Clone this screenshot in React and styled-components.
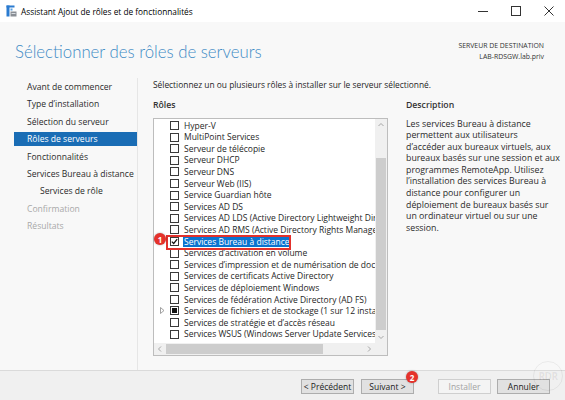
import React from "react";
import styled, { createGlobalStyle } from "styled-components";

const Global = createGlobalStyle`
  html, body { margin: 0; padding: 0; }
  body {
    width: 565px; height: 400px; overflow: hidden; background: #fff;
    font-family: "Open Sans", "Noto Sans", sans-serif; color: #262626;
  }
  * { box-sizing: border-box; }
`;

const Window = styled.div`
  display: flex; flex-direction: column;
  width: 565px; height: 400px; background: #f8f8f8;
`;

const TitleBar = styled.div`
  height: 22px; background: #fff; display: flex; align-items: center;
  padding-left: 6px; flex-shrink: 0;
`;
const TitleText = styled.span`
  flex: 1; margin-left: 4px; font-size: 8.3px; color: #000; white-space: nowrap;
`;
const Controls = styled.div`display: flex; height: 100%;`;
const CtrlBtn = styled.div`
  width: 33px; height: 100%; display: flex; align-items: center; justify-content: center;
`;

const Header = styled.div`
  height: 56px; display: flex; justify-content: space-between; align-items: flex-start;
  padding: 0 21px 0 15px; flex-shrink: 0;
`;
const Heading = styled.h1`
  margin: 18px 0 0; font-family: Lato, "Open Sans", sans-serif; font-size: 16.8px; font-weight: 300;
  color: #3f8bc5; line-height: 24px;
`;
const Dest = styled.div`
  margin-top: 19px; text-align: right; font-size: 6.9px; line-height: 10.5px; color: #333;
`;

const Body = styled.div`display: flex; flex: 1; min-height: 0;`;

const Nav = styled.nav`
  width: 138px; border-right: 1px solid #e6e6e6; padding: 2px 0 0 14px;
  display: flex; flex-direction: column; gap: 3.4px; flex-shrink: 0;
`;
const NavItem = styled.div`
  height: 14px; line-height: 14px; padding-left: ${p => (p.$sub ? 26 : 13)}px;
  font-size: 8.6px; white-space: nowrap;
  color: ${p => (p.$active ? "#fff" : p.$disabled ? "#a8a8a8" : "#2b2b2b")};
  background: ${p => (p.$active ? "#1a6db5" : "transparent")};
`;

const Main = styled.div`
  flex: 1; padding: 1px 0 0 15px; display: flex; flex-direction: column; min-width: 0;
`;
const Instruction = styled.div`font-size: 8.4px; line-height: 12px; white-space: nowrap;`;
const Columns = styled.div`display: flex; margin-top: 8px; gap: 18px;`;
const LeftCol = styled.div`width: 235px; display: flex; flex-direction: column; flex-shrink: 0;`;
const RightCol = styled.div`width: 160px; display: flex; flex-direction: column;`;
const Label = styled.div`font-size: 8.7px; line-height: 12px; font-weight: 600; color: #333;`;

const ListBox = styled.div`
  position: relative; margin-top: 7px; height: 238px; border: 1px solid #bdbdbd; background: #fff;
  display: grid; grid-template-columns: minmax(0, 1fr) 12px; grid-template-rows: minmax(0, 1fr) 12px;
`;
const ListContent = styled.div`overflow: hidden; padding-top: 0.7px; min-width: 0;`;
const Row = styled.div`
  height: 11.6px; display: flex; align-items: center; padding-left: 3px; white-space: nowrap;
`;
const Expander = styled.div`
  width: 13px; height: 11.6px; display: flex; align-items: center; padding-left: 3px; flex-shrink: 0;
`;
const Check = styled.div`
  width: 9px; height: 9px; border: 1px solid #3a3a3a; background: #fff; flex-shrink: 0;
  display: flex; align-items: center; justify-content: center;
`;
const Fill = styled.div`width: 5px; height: 5px; background: #111;`;
const ItemText = styled.span`
  flex-shrink: 0; margin-left: 4px; padding: 0 1px; font-size: 8.5px; line-height: 11.6px;
  color: ${p => (p.$selected ? "#fff" : "#262626")};
  background: ${p => (p.$selected ? "#0a74d0" : "transparent")};
`;

const VScroll = styled.div`
  background: #f0f0f0; display: flex; flex-direction: column; align-items: stretch; min-height: 0;
`;
const HScroll = styled.div`background: #f0f0f0; display: flex; align-items: stretch;`;
const Corner = styled.div`background: #f0f0f0;`;
const Arrow = styled.div`
  width: 12px; height: 12px; display: flex; align-items: center; justify-content: center; flex-shrink: 0;
`;
const VTrack = styled.div`flex: 1; min-height: 0; padding: 27px 1px 0;`;
const VThumb = styled.div`height: 172px; background: #cdcdcd;`;
const HTrack = styled.div`flex: 1; padding: 1px 0;`;
const HThumb = styled.div`width: 157px; height: 100%; background: #cdcdcd;`;

const Annot = styled.div`
  position: absolute; left: 12px; top: 115.5px; width: 125px; height: 15px;
  border: 2px solid #e2312c; pointer-events: none;
`;
const Badge = styled.div`
  position: absolute; width: 12px; height: 12px; border-radius: 50%;
  background: #e5322b; color: #fff; font-size: 8px; font-weight: 700;
  display: flex; align-items: center; justify-content: center;
  box-shadow: 0 0 2px rgba(0,0,0,0.35);
  left: ${p => p.$x}px; top: ${p => p.$y}px;
`;

const Desc = styled.div`
  margin-top: 7.5px; font-size: 8.8px; line-height: 11.6px; color: #2b2b2b; white-space: nowrap;
`;
const Line = styled.div``;

const Footer = styled.div`
  position: relative; height: 30px; border-top: 1px solid #dadada; background: #f0f0f0;
  display: flex; align-items: flex-start; padding: 8px 15px 0 0; justify-content: flex-end; flex-shrink: 0;
`;
const Button = styled.div`
  width: 53px; height: 15px; margin-left: ${p => p.$gap || 0}px;
  border: 1px solid ${p => (p.$disabled ? "#cfcfcf" : "#adadad")};
  background: ${p => (p.$disabled ? "#f4f4f4" : "#e1e1e1")};
  color: ${p => (p.$disabled ? "#a3a3a3" : "#222")};
  font-size: 8.5px; display: flex; align-items: center; justify-content: center; white-space: nowrap;
`;
const Watermark = styled.div`
  position: absolute; right: 2px; top: -10px; width: 30px; height: 30px; border-radius: 50%;
  border: 1px solid rgba(0,0,0,0.06); color: rgba(0,0,0,0.07); font-size: 10px; font-weight: 700;
  display: flex; align-items: center; justify-content: center; letter-spacing: -0.5px;
`;

const items = [
  { t: "Hyper-V" },
  { t: "MultiPoint Services" },
  { t: "Serveur de télécopie" },
  { t: "Serveur DHCP" },
  { t: "Serveur DNS" },
  { t: "Serveur Web (IIS)" },
  { t: "Service Guardian hôte" },
  { t: "Services AD DS" },
  { t: "Services AD LDS (Active Directory Lightweight Directory Services)" },
  { t: "Services AD RMS (Active Directory Rights Management Services)" },
  { t: "Services Bureau à distance", checked: true, selected: true },
  { t: "Services d’activation en volume" },
  { t: "Services d’impression et de numérisation de document" },
  { t: "Services de certificats Active Directory" },
  { t: "Services de déploiement Windows" },
  { t: "Services de fédération Active Directory (AD FS)" },
  { t: "Services de fichiers et de stockage (1 sur 12 installé(s))", partial: true, expand: true },
  { t: "Services de stratégie et d’accès réseau" },
  { t: "Services WSUS (Windows Server Update Services)" },
];

const descLines = [
  "Les services Bureau à distance",
  "permettent aux utilisateurs",
  "d’accéder aux bureaux virtuels, aux",
  "bureaux basés sur une session et aux",
  "programmes RemoteApp. Utilisez",
  "l’installation des services Bureau à",
  "distance pour configurer un",
  "déploiement de bureaux basés sur",
  "un ordinateur virtuel ou sur une",
  "session.",
];

const AppIcon = () => (
  <svg width="11" height="12" viewBox="0 0 11 12">
    <rect x="0.5" y="0.5" width="3" height="11" fill="#2a7bd0" />
    <rect x="0.5" y="0.5" width="8" height="2" fill="#2a7bd0" />
    <rect x="4.5" y="3.5" width="2" height="2" fill="#5aa0e0" />
    <rect x="4.5" y="6.5" width="6" height="5" fill="#8a8f96" />
    <rect x="5.5" y="8" width="4" height="1" fill="#d9dde2" />
  </svg>
);

const Chevron = ({ dir }) => {
  const paths = {
    up: "M1.5 5 L4 2.5 L6.5 5",
    down: "M1.5 3 L4 5.5 L6.5 3",
    left: "M5 1.5 L2.5 4 L5 6.5",
    right: "M3 1.5 L5.5 4 L3 6.5",
  };
  return (
    <svg width="8" height="8" viewBox="0 0 8 8">
      <path d={paths[dir]} fill="none" stroke="#a6a6a6" strokeWidth="1" />
    </svg>
  );
};

export default function App() {
  return (
    <>
      <Global />
      <Window>
        <TitleBar>
          <AppIcon />
          <TitleText>Assistant Ajout de rôles et de fonctionnalités</TitleText>
          <Controls>
            <CtrlBtn>
              <svg width="10" height="10" viewBox="0 0 10 10"><path d="M0 5.5 H10" stroke="#333" strokeWidth="1" /></svg>
            </CtrlBtn>
            <CtrlBtn>
              <svg width="10" height="10" viewBox="0 0 10 10"><rect x="0.5" y="0.5" width="9" height="9" fill="none" stroke="#333" strokeWidth="1" /></svg>
            </CtrlBtn>
            <CtrlBtn>
              <svg width="10" height="10" viewBox="0 0 10 10"><path d="M0.5 0.5 L9.5 9.5 M9.5 0.5 L0.5 9.5" stroke="#333" strokeWidth="1" /></svg>
            </CtrlBtn>
          </Controls>
        </TitleBar>

        <Header>
          <Heading>Sélectionner des rôles de serveurs</Heading>
          <Dest>
            <div>SERVEUR DE DESTINATION</div>
            <div>LAB-RDSGW.lab.priv</div>
          </Dest>
        </Header>

        <Body>
          <Nav>
            <NavItem>Avant de commencer</NavItem>
            <NavItem>Type d’installation</NavItem>
            <NavItem>Sélection du serveur</NavItem>
            <NavItem $active>Rôles de serveurs</NavItem>
            <NavItem>Fonctionnalités</NavItem>
            <NavItem>Services Bureau à distance</NavItem>
            <NavItem $sub>Services de rôle</NavItem>
            <NavItem $disabled>Confirmation</NavItem>
            <NavItem $disabled>Résultats</NavItem>
          </Nav>

          <Main>
            <Instruction>Sélectionnez un ou plusieurs rôles à installer sur le serveur sélectionné.</Instruction>
            <Columns>
              <LeftCol>
                <Label>Rôles</Label>
                <ListBox>
                  <ListContent>
                    {items.map((it) => (
                      <Row key={it.t}>
                        <Expander>
                          {it.expand && (
                            <svg width="5" height="7" viewBox="0 0 5 7">
                              <path d="M0.5 0.5 L4 3.5 L0.5 6.5 Z" fill="none" stroke="#8a8a8a" strokeWidth="0.8" />
                            </svg>
                          )}
                        </Expander>
                        <Check>
                          {it.checked && (
                            <svg width="7" height="7" viewBox="0 0 7 7">
                              <path d="M0.8 3.6 L2.7 5.5 L6.2 1.2" fill="none" stroke="#111" strokeWidth="1.2" />
                            </svg>
                          )}
                          {it.partial && <Fill />}
                        </Check>
                        <ItemText $selected={it.selected}>{it.t}</ItemText>
                      </Row>
                    ))}
                  </ListContent>
                  <VScroll>
                    <Arrow><Chevron dir="up" /></Arrow>
                    <VTrack><VThumb /></VTrack>
                    <Arrow><Chevron dir="down" /></Arrow>
                  </VScroll>
                  <HScroll>
                    <Arrow><Chevron dir="left" /></Arrow>
                    <HTrack><HThumb /></HTrack>
                    <Arrow><Chevron dir="right" /></Arrow>
                  </HScroll>
                  <Corner />
                  <Annot />
                  <Badge $x={0} $y={114}>1</Badge>
                </ListBox>
              </LeftCol>
              <RightCol>
                <Label>Description</Label>
                <Desc>
                  {descLines.map((l) => <Line key={l}>{l}</Line>)}
                </Desc>
              </RightCol>
            </Columns>
          </Main>
        </Body>

        <Footer>
          <Button>&lt; Précédent</Button>
          <Button $gap={7}>Suivant &gt;</Button>
          <Button $gap={24} $disabled>Installer</Button>
          <Button $gap={6}>Annuler</Button>
          <Badge $x={406} $y={0}>2</Badge>
          <Watermark>RDR</Watermark>
        </Footer>
      </Window>
    </>
  );
}
